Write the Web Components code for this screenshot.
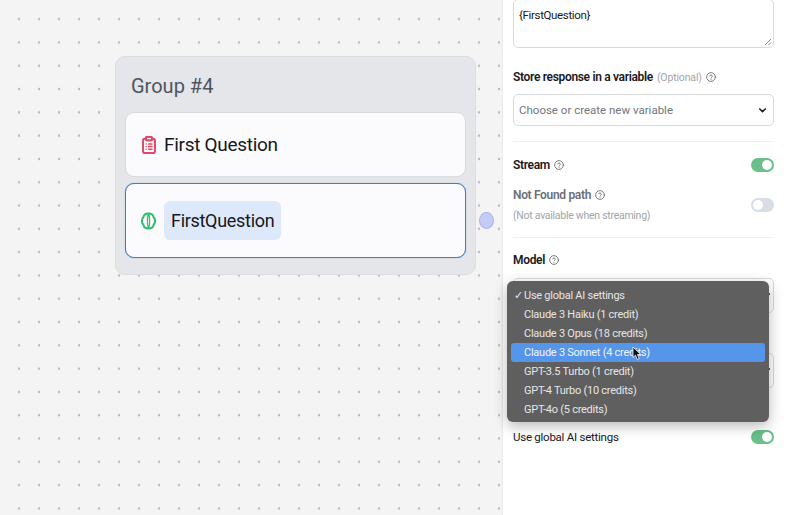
<!DOCTYPE html>
<html lang="en">
<head>
<meta charset="utf-8">
<title>Flow editor</title>
<style>
  html, body { margin: 0; height: 100%; overflow: hidden; }
  body { font-family: "Roboto", "Open Sans", sans-serif; }
</style>
</head>
<body>
<flow-editor>
  <flow-canvas slot="canvas">
    <group-card title="Group #4">
      <block-row icon="clipboard">First Question</block-row>
      <block-row icon="brain" selected><span>FirstQuestion</span></block-row>
    </group-card>
  </flow-canvas>
  <side-panel slot="panel"></side-panel>
</flow-editor>

<script>
class FlowEditor extends HTMLElement {
    constructor() {
        super();
        this.attachShadow({ mode: 'open' });
        this.shadowRoot.innerHTML = `
            <style>
                :host { display: grid; grid-template-columns: 502px 1fr; height: 515px; overflow: hidden; position: relative; }
            </style>
            <slot name="canvas"></slot>
            <slot name="panel"></slot>
        `;
    }
}

class FlowCanvas extends HTMLElement {
    constructor() {
        super();
        this.attachShadow({ mode: 'open' });
        this.shadowRoot.innerHTML = `
            <style>
                :host {
                    display: block;
                    position: relative;
                    height: 515px;
                    background-color: #f4f4f5;
                    background-image: radial-gradient(circle, #b9bbc0 1.2px, transparent 1.6px);
                    background-size: 20px 23.3px;
                    background-position: 9px 7.5px;
                }
            </style>
            <slot></slot>
        `;
    }
}

class GroupCard extends HTMLElement {
    constructor() {
        super();
        this.attachShadow({ mode: 'open' });
        this.shadowRoot.innerHTML = `
            <style>
                :host {
                    display: block;
                    position: absolute;
                    left: 115px;
                    top: 56px;
                    width: 361px;
                    height: 219px;
                    box-sizing: border-box;
                    background: #e5e6ea;
                    border: 1px solid #dcdde2;
                    border-radius: 10px;
                    padding: 0 9px;
                }
                h2 {
                    margin: 0;
                    height: 55px;
                    padding: 2px 0 0 6px;
                    box-sizing: border-box;
                    display: flex;
                    align-items: center;
                    font: 400 20px "Roboto", sans-serif;
                    color: #4b5563;
                }
                .rows { display: flex; flex-direction: column; gap: 6px; }
                .port {
                    position: absolute;
                    left: 363px;
                    top: 155px;
                    width: 15px;
                    height: 17px;
                    box-sizing: border-box;
                    border-radius: 50%;
                    background: #c3cbf6;
                    border: 1px solid #a9b4ea;
                }
            </style>
            <h2></h2>
            <div class="rows"><slot></slot></div>
            <div class="port"></div>
        `;
    }

    connectedCallback() {
        this.shadowRoot.querySelector('h2').textContent = this.getAttribute('title');
    }
}

class BlockRow extends HTMLElement {
    static icons = {
        clipboard: `<svg width="14" height="18" viewBox="0 0 16 19" preserveAspectRatio="none" fill="none" stroke="#df4a68" stroke-width="2.300" stroke-linecap="round" stroke-linejoin="round">
            <path d="M4.500 3H3a1.800 1.800 0 0 0-1.800 1.800v11.400A1.800 1.800 0 0 0 3 18h10a1.800 1.800 0 0 0 1.800-1.800V4.800A1.800 1.800 0 0 0 13 3h-1.500"/>
            <rect x="4.500" y="1" width="7" height="3.600" rx="1"/>
            <path d="M4.700 8.500h.1M4.700 11.200h.1M4.700 13.900h.1M7.500 8.500h4M7.500 11.200h4M7.500 13.900h4" stroke-width="1.600"/>
        </svg>`,
        brain: `<svg width="15" height="18" viewBox="0 0 16 18" preserveAspectRatio="none" fill="none" stroke="#2bbf6b" stroke-width="2.100" stroke-linecap="round" stroke-linejoin="round">
            <path d="M8 1.500C5 1.500 2.800 3.200 2.500 5.400 1.400 6.300 1 7.600 1 9s.4 2.700 1.500 3.600c.3 2.200 2.500 3.900 5.500 3.900 3 0 5.200-1.700 5.500-3.900C14.600 11.700 15 10.400 15 9s-.4-2.700-1.500-3.600C13.200 3.200 11 1.500 8 1.500Z"/>
            <path d="M8 1.500C7 4 6.800 6.500 6.800 9s.2 5 1.200 7.500C9 14 9.200 11.500 9.200 9S9 4 8 1.500Z" stroke-width="1.300"/>
        </svg>`
    };

    constructor() {
        super();
        this.attachShadow({ mode: 'open' });
        this.shadowRoot.innerHTML = `
            <style>
                :host {
                    display: flex;
                    align-items: center;
                    gap: 8px;
                    box-sizing: border-box;
                    height: 65px;
                    padding: 0 14px 0 15px;
                    background: #fbfbfd;
                    border: 1px solid #d9dade;
                    border-radius: 9px;
                    font: 400 19px "Roboto", sans-serif;
                    letter-spacing: -0.3px;
                    color: #17181c;
                }
                :host([selected]) {
                    height: 75px;
                    border-color: #3b7dd6;
                    box-shadow: 0 0 0.8px #3b7dd6;
                }
                .icon { display: flex; width: 15px; justify-content: center; }
                ::slotted(span) {
                    display: block;
                    background: #dde9fb;
                    border-radius: 6px;
                    padding: 9px 7px;
                    font-size: 18px;
                }
            </style>
            <span class="icon"></span>
            <slot></slot>
        `;
    }

    connectedCallback() {
        this.shadowRoot.querySelector('.icon').innerHTML = BlockRow.icons[this.getAttribute('icon')];
    }
}

class HelpIcon extends HTMLElement {
    constructor() {
        super();
        this.attachShadow({ mode: 'open' });
        this.shadowRoot.innerHTML = `
            <style>
                :host { display: inline-flex; }
            </style>
            <svg width="10" height="10" viewBox="0 0 24 24" fill="none" stroke="#5f646c" stroke-width="2" stroke-linecap="round" stroke-linejoin="round">
                <circle cx="12" cy="12" r="10.500"/>
                <path d="M8.800 9.300a3.300 3.300 0 0 1 6.400 1c0 2.200-3.200 2.700-3.200 4.200"/>
                <path d="M12 18h.01"/>
            </svg>
        `;
    }
}

class ToggleSwitch extends HTMLElement {
    constructor() {
        super();
        this.attachShadow({ mode: 'open' });
        this.shadowRoot.innerHTML = `
            <style>
                :host {
                    display: flex;
                    align-items: center;
                    width: 23px;
                    height: 14px;
                    padding: 0 2px;
                    box-sizing: border-box;
                    border-radius: 7px;
                    background: #d8dde6;
                }
                :host([on]) { background: #68bf87; justify-content: flex-end; }
                i { width: 10px; height: 10px; border-radius: 50%; background: #fff; }
            </style>
            <i></i>
        `;
    }
}

class SelectBox extends HTMLElement {
    constructor() {
        super();
        this.attachShadow({ mode: 'open' });
        this.shadowRoot.innerHTML = `
            <style>
                :host {
                    display: flex;
                    align-items: center;
                    justify-content: space-between;
                    box-sizing: border-box;
                    height: 32px;
                    padding: 0 var(--chevron-gap, 7px) 0 5px;
                    border: 1px solid #d8dade;
                    border-radius: 5px;
                    background: #fff;
                    font: 400 11.500px "Roboto", sans-serif;
                    color: #71757c;
                }
                svg { margin-left: auto; }
            </style>
            <slot></slot>
            <svg width="7" height="5" viewBox="0 0 9 6" fill="none" stroke="#1c1d20" stroke-width="2" stroke-linecap="round" stroke-linejoin="round"><path d="M1 1l3.500 3.500L8 1"/></svg>
        `;
    }
}

class NativeMenu extends HTMLElement {
    constructor() {
        super();
        this.attachShadow({ mode: 'open' });
        const items = [
            'Use global AI settings',
            'Claude 3 Haiku (1 credit)',
            'Claude 3 Opus (18 credits)',
            'Claude 3 Sonnet (4 credits)',
            'GPT-3.5 Turbo (1 credit)',
            'GPT-4 Turbo (10 credits)',
            'GPT-4o (5 credits)'
        ];
        this.shadowRoot.innerHTML = `
            <style>
                :host {
                    display: block;
                    position: absolute;
                    left: 507px;
                    top: 281px;
                    width: 262px;
                    height: 141px;
                    box-sizing: border-box;
                    padding: 5px 4px;
                    background: #5f5f5f;
                    border-radius: 6px;
                    box-shadow: 0 4px 14px rgba(0, 0, 0, .28);
                    font: 400 11px "Roboto", sans-serif;
                    letter-spacing: -0.25px;
                    color: #e6e6e6;
                    z-index: 5;
                }
                div { position: relative; height: 19px; line-height: 19px; padding-left: 13px; border-radius: 3px; white-space: nowrap; }
                .active { background: #5596ea; color: #f0f4fa; }
                .check { position: absolute; left: 3px; }
                svg { position: absolute; left: 121px; top: 3px; }
            </style>
            ${items.map((item, i) => `<div class="${i === 3 ? 'active' : ''}">${i === 0 ? '<span class="check">✓</span>' : ''}${item}${i === 3 ? `
                <svg width="10" height="15" viewBox="0 0 10 15"><path d="M1 1v10.500l2.500-2.300 1.700 4.200 2-.8-1.700-4.100h3.300z" fill="#111" stroke="#fff" stroke-width=".8"/></svg>` : ''}</div>`).join('')}
        `;
    }
}

class SidePanel extends HTMLElement {
    constructor() {
        super();
        this.attachShadow({ mode: 'open' });
        this.shadowRoot.innerHTML = `
            <style>
                :host {
                    display: block;
                    height: 515px;
                    box-sizing: border-box;
                    background: #fff;
                    border-left: 1px solid #e9e9ec;
                    padding: 0 14px 0 10px;
                    font: 400 11.500px "Roboto", sans-serif;
                    color: #17181c;
                    overflow: hidden;
                }
                .note {
                    box-sizing: border-box;
                    height: 49px;
                    margin-top: -1px;
                    padding: 8px 5px;
                    border: 1px solid #d8dade;
                    border-radius: 5px;
                    position: relative;
                    letter-spacing: -0.35px;
                }
                .grip { position: absolute; right: 1px; bottom: 1px; }
                .label { display: flex; align-items: center; gap: 4px; font-weight: 600; font-size: 12px; letter-spacing: -0.33px; }
                .label small { font-weight: 400; font-size: 10.500px; letter-spacing: -0.15px; color: #a1a4aa; }
                hr { border: 0; border-top: 1px solid #eeeff1; margin: 0; }
                .store { margin-top: 21px; height: 16px; }
                .store + select-box { margin-top: 9px; }
                .first-rule { margin-top: 15px; }
                .row { display: flex; justify-content: space-between; align-items: center; }
                .stream { margin-top: 15px; height: 16px; }
                .nf { margin-top: 15px; height: 34px; }
                .nf .label { color: #6b6f76; margin-bottom: 6px; height: 15px; }
                .sub { font-size: 10.500px; letter-spacing: -0.27px; color: #a1a4aa; line-height: 14px; }
                .second-rule { margin-top: 15px; margin-bottom: 14px; }
                .model { height: 16px; margin-bottom: 10px; }
                .model-box { height: 35px; --chevron-gap: 3px; }
                .next-box { height: 35px; margin-top: 40px; --chevron-gap: 3px; }
                .global { margin-top: 42px; letter-spacing: -0.25px; }
            </style>
            <div class="note">{FirstQuestion}
                <svg class="grip" width="8" height="8" viewBox="0 0 8 8" stroke="#8a8c90" stroke-width="1"><path d="M1 7l6-6M4.500 7L7 4.500"/></svg>
            </div>
            <div class="label store">Store response in a variable <small>(Optional)</small><help-icon></help-icon></div>
            <select-box>Choose or create new variable</select-box>
            <hr class="first-rule">
            <div class="row stream"><span class="label">Stream <help-icon></help-icon></span><toggle-switch on></toggle-switch></div>
            <div class="row nf">
                <div>
                    <div class="label">Not Found path <help-icon></help-icon></div>
                    <div class="sub">(Not available when streaming)</div>
                </div>
                <toggle-switch></toggle-switch>
            </div>
            <hr class="second-rule">
            <div class="label model">Model <help-icon></help-icon></div>
            <select-box class="model-box"></select-box>
            <select-box class="next-box"></select-box>
            <div class="row global"><span>Use global AI settings</span><toggle-switch on></toggle-switch></div>
            <native-menu></native-menu>
        `;
    }
}

customElements.define('flow-editor', FlowEditor);
customElements.define('flow-canvas', FlowCanvas);
customElements.define('group-card', GroupCard);
customElements.define('block-row', BlockRow);
customElements.define('help-icon', HelpIcon);
customElements.define('toggle-switch', ToggleSwitch);
customElements.define('select-box', SelectBox);
customElements.define('native-menu', NativeMenu);
customElements.define('side-panel', SidePanel);
</script>
</body>
</html>
